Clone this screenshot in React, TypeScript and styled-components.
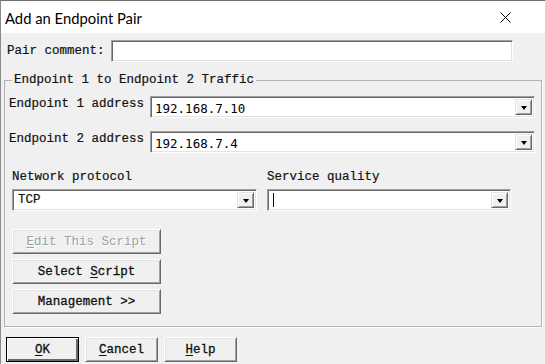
import styled, { createGlobalStyle } from 'styled-components';

const GlobalStyle = createGlobalStyle`
  html, body {
    margin: 0;
    padding: 0;
    background: #f0f0f0;
  }
  * {
    box-sizing: border-box;
  }
`;

export default function App() {
  return (
    <>
      <GlobalStyle />
      <Window>
        <TitleBar>
          <Title>Add an Endpoint Pair</Title>
          <CloseButton>
            <svg width="11" height="11" viewBox="0 0 11 11">
              <path d="M0.5 0.5 L10.5 10.5 M10.5 0.5 L0.5 10.5" stroke="#000" strokeWidth="1" />
            </svg>
          </CloseButton>
        </TitleBar>
        <Body>
          <CommentRow>
            <Label>Pair comment:</Label>
            <TextInput />
          </CommentRow>

          <Group>
            <Legend>Endpoint 1 to Endpoint 2 Traffic</Legend>
            <AddressRow>
              <AddressLabel>Endpoint 1 address</AddressLabel>
              <Combo $width={385}>
                <IpText>192.168.7.10</IpText>
                <DropButton>
                  <Arrow />
                </DropButton>
              </Combo>
            </AddressRow>
            <AddressRow>
              <AddressLabel>Endpoint 2 address</AddressLabel>
              <Combo $width={385}>
                <IpText>192.168.7.4</IpText>
                <DropButton>
                  <Arrow />
                </DropButton>
              </Combo>
            </AddressRow>

            <SelectGrid>
              <Field>
                <Label>Network protocol</Label>
                <Combo $width={245}>
                  <ComboText>TCP</ComboText>
                  <DropButton>
                    <Arrow />
                  </DropButton>
                </Combo>
              </Field>
              <Field>
                <Label>Service quality</Label>
                <Combo $width={244}>
                  <ComboText>
                    <Caret />
                  </ComboText>
                  <DropButton>
                    <Arrow />
                  </DropButton>
                </Combo>
              </Field>
            </SelectGrid>

            <ButtonStack>
              <Button $width={149} disabled>
                <u>E</u>dit This Script
              </Button>
              <Button $width={149}>
                Select <u>S</u>cript
              </Button>
              <Button $width={149}>Management &gt;&gt;</Button>
            </ButtonStack>
          </Group>

          <Footer>
            <Button $width={73} $default>
              <u>O</u>K
            </Button>
            <Button $width={73}>
              <u>C</u>ancel
            </Button>
            <Button $width={73}>
              <u>H</u>elp
            </Button>
          </Footer>
        </Body>
      </Window>
    </>
  );
}

const Window = styled.div`
  width: 545px;
  height: 364px;
  overflow: hidden;
  background: #f0f0f0;
  border-top: 1px solid #6f6f6f;
  border-left: 1px solid #8a8a8a;
  display: flex;
  flex-direction: column;
`;

const TitleBar = styled.div`
  height: 32px;
  flex-shrink: 0;
  background: #fff;
  display: flex;
  align-items: center;
  justify-content: space-between;
  padding: 0 34px 0 4px;
`;

const Title = styled.div`
  font-family: Lato, 'Noto Sans', sans-serif;
  font-size: 14.8px;
  color: #000;
  padding-top: 1px;
`;

const CloseButton = styled.div`
  display: flex;
  align-items: center;
  padding-top: 1px;
`;

const Body = styled.div`
  padding: 7px 3px 0 3px;
  font-family: 'Liberation Mono', 'Courier New', monospace;
  font-size: 12.5px;
  color: #000;
`;

const CommentRow = styled.div`
  display: flex;
  align-items: center;
  gap: 6px;
  padding-left: 3px;
`;

const Label = styled.div`
  font-family: 'Liberation Mono', 'Courier New', monospace;
  font-size: 12.5px;
  line-height: 15px;
  white-space: nowrap;
  color: #111;
  -webkit-text-stroke: 0.2px #111;
`;

const sunken = `
  background: #fff;
  border-style: solid;
  border-width: 1px;
  border-color: #a0a0a0 #fff #fff #a0a0a0;
  box-shadow: inset 1px 1px #696969, inset -1px -1px #e3e3e3;
`;

const TextInput = styled.div`
  ${sunken}
  width: 402px;
  height: 22px;
`;

const Group = styled.fieldset`
  margin: 11px 0 0 0;
  padding: 0 6px 12px 4px;
  border: 1px solid #b4b4b4;
  box-shadow: 1px 1px 0 #fff;
  min-width: 0;
`;

const Legend = styled.legend`
  padding: 0 2px;
  margin-left: 3px;
  line-height: 14px;
  font-family: 'Liberation Mono', 'Courier New', monospace;
  font-size: 12.5px;
  color: #111;
  -webkit-text-stroke: 0.2px #111;
`;

const AddressRow = styled.div`
  display: flex;
  align-items: flex-start;
  margin-top: 9px;
  & + & {
    margin-top: 13px;
  }
`;

const AddressLabel = styled(Label)`
  width: 141px;
  padding-top: 1px;
`;

const Combo = styled.div<{ $width: number }>`
  ${sunken}
  width: ${(p) => p.$width}px;
  height: 22px;
  display: flex;
  align-items: stretch;
  padding: 2px;
`;

const ComboText = styled.div`
  flex: 1;
  display: flex;
  align-items: center;
  padding-left: 3px;
  font-family: 'Liberation Mono', 'Courier New', monospace;
  font-size: 12.5px;
  color: #111;
  -webkit-text-stroke: 0.2px #111;
`;

const IpText = styled(ComboText)`
  font-family: 'DejaVu Sans Mono', 'Liberation Mono', monospace;
  font-size: 12.5px;
  padding-left: 2px;
  padding-top: 2px;
  -webkit-text-stroke: 0;
  color: #000;
`;

const Caret = styled.span`
  display: block;
  width: 1px;
  height: 14px;
  background: #000;
`;

const DropButton = styled.div`
  width: 17px;
  background: #f0f0f0;
  border-style: solid;
  border-width: 1px;
  border-color: #e3e3e3 #696969 #696969 #e3e3e3;
  box-shadow: inset 1px 1px #fff, inset -1px -1px #a0a0a0;
  display: flex;
  align-items: center;
  justify-content: center;
  padding-top: 2px;
`;

const Arrow = styled.span`
  width: 0;
  height: 0;
  border-left: 3.5px solid transparent;
  border-right: 3.5px solid transparent;
  border-top: 4px solid #000;
`;

const SelectGrid = styled.div`
  display: grid;
  grid-template-columns: 245px 244px;
  column-gap: 10px;
  margin-top: 17px;
  padding-left: 3px;
`;

const Field = styled.div`
  display: flex;
  flex-direction: column;
  gap: 4px;
`;

const ButtonStack = styled.div`
  display: flex;
  flex-direction: column;
  gap: 5px;
  margin-top: 18px;
  padding-left: 3px;
`;

const Button = styled.button<{ $width: number; $default?: boolean }>`
  width: ${(p) => p.$width}px;
  height: 25px;
  padding: 0;
  background: #f0f0f0;
  font-family: 'Liberation Mono', 'Courier New', monospace;
  font-size: 12.5px;
  color: #111;
  -webkit-text-stroke: 0.3px #111;
  border-style: solid;
  border-width: 1px;
  border-color: ${(p) => (p.$default ? '#000' : '#fff #696969 #696969 #fff')};
  box-shadow: ${(p) =>
    p.$default
      ? 'inset 1px 1px #fff, inset -2px -2px #696969'
      : 'inset 1px 1px #e3e3e3, inset -1px -1px #a0a0a0'};
  display: flex;
  align-items: center;
  justify-content: center;
  white-space: pre;

  &:disabled {
    color: #a0a0a0;
    -webkit-text-stroke: 0;
    text-shadow: 1px 1px #fff;
  }

  u {
    text-underline-offset: 2px;
  }
`;

const Footer = styled.div`
  display: flex;
  gap: 6px;
  margin-top: 10px;
  padding-left: 2px;
`;
